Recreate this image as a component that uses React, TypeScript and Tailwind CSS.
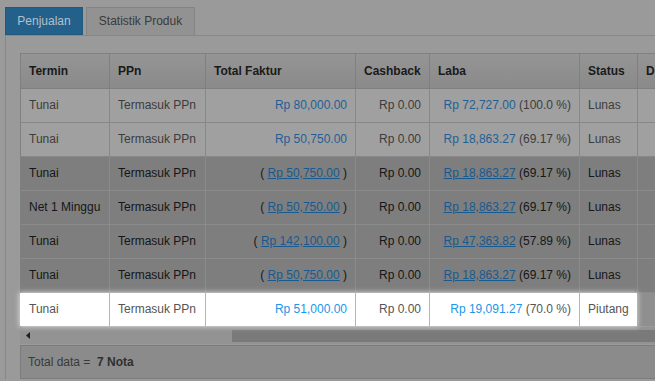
import React from 'react';

type Row = {
  termin: string;
  total: string;
  laba: string;
  persen: string;
  status: string;
  retur?: boolean;
};

const rows: Row[] = [
  { termin: 'Tunai', total: 'Rp 80,000.00', laba: 'Rp 72,727.00', persen: '(100.0 %)', status: 'Lunas' },
  { termin: 'Tunai', total: 'Rp 50,750.00', laba: 'Rp 18,863.27', persen: '(69.17 %)', status: 'Lunas' },
  { termin: 'Tunai', total: 'Rp 50,750.00', laba: 'Rp 18,863.27', persen: '(69.17 %)', status: 'Lunas', retur: true },
  { termin: 'Net 1 Minggu', total: 'Rp 50,750.00', laba: 'Rp 18,863.27', persen: '(69.17 %)', status: 'Lunas', retur: true },
  { termin: 'Tunai', total: 'Rp 142,100.00', laba: 'Rp 47,363.82', persen: '(57.89 %)', status: 'Lunas', retur: true },
  { termin: 'Tunai', total: 'Rp 50,750.00', laba: 'Rp 18,863.27', persen: '(69.17 %)', status: 'Lunas', retur: true },
];

const cell = 'px-2 flex items-center border-r shrink-0';

function DataRow({ row }: { row: Row }) {
  const bg = row.retur ? 'bg-[#7e7e7e] border-[#8b8b8b] text-[#161616]' : 'bg-[#a0a0a0] border-[#888888] text-[#3c3c3c]';
  const link = row.retur ? 'text-[#175a90] underline' : 'text-[#1f5f96]';
  return (
    <div className={`flex h-[34px] border-b ${bg}`}>
      <div className={`${cell} w-[89px] ${bg}`}>{row.termin}</div>
      <div className={`${cell} w-[96px] ${bg}`}>Termasuk PPn</div>
      <div className={`${cell} w-[150px] justify-end ${bg}`}>
        {row.retur ? (
          <span>
            ( <span className={link}>{row.total}</span> )
          </span>
        ) : (
          <span className={link}>{row.total}</span>
        )}
      </div>
      <div className={`${cell} w-[74px] justify-end ${bg}`}>Rp 0.00</div>
      <div className={`${cell} w-[150px] justify-end ${bg}`}>
        <span className={link}>{row.laba}</span>&nbsp;{row.persen}
      </div>
      <div className={`${cell} w-[58px] ${bg}`}>{row.status}</div>
      <div className={`${cell} w-[120px] ${bg}`}></div>
    </div>
  );
}

export default function App() {
  return (
    <div
      className="w-[655px] h-[381px] overflow-hidden bg-[#9a9a9a] text-[12px] leading-[17px] text-[#3c3c3c]"
      style={{ fontFamily: '"Liberation Sans", Arial, sans-serif' }}
    >
      <div className="flex gap-[3px] pl-[5px] pt-[7px]">
        <div className="h-[28px] w-[78px] flex items-center justify-center bg-[#24618a] border border-[#22587d] text-[#b3c0ca]">
          Penjualan
        </div>
        <div className="h-[28px] w-[109px] flex items-center justify-center bg-[#929292] border border-[#848484] border-b-0 text-[#3a3a3a]">
          Statistik Produk
        </div>
      </div>

      <div className="ml-[5px] border-l border-t border-[#878787] pt-[17px] pl-[14px] w-[700px]">
        <div className="w-[760px] border-l border-t border-[#808080]">
          <div className="flex h-[35px] border-b border-[#808080] bg-gradient-to-b from-[#959595] to-[#8a8a8a] font-bold text-[#1a1a1a]">
            <div className={`${cell} w-[89px] border-[#808080]`}>Termin</div>
            <div className={`${cell} w-[96px] border-[#808080]`}>PPn</div>
            <div className={`${cell} w-[150px] border-[#808080]`}>Total Faktur</div>
            <div className={`${cell} w-[74px] border-[#808080]`}>Cashback</div>
            <div className={`${cell} w-[150px] border-[#808080]`}>Laba</div>
            <div className={`${cell} w-[58px] border-[#808080]`}>Status</div>
            <div className={`${cell} w-[120px] border-[#808080]`}>Detail</div>
          </div>

          {rows.map((r, i) => (
            <DataRow key={i} row={r} />
          ))}

          <div className="flex h-[34px] border-b border-[#9b9b9b] bg-[#8f8f8f]">
            <div className="relative z-10 flex bg-white shadow-[0_0_5px_1px_rgba(255,255,255,0.6)] -ml-px pl-px">
              <div className={`${cell} w-[89px] border-[#b5b5b5] text-[#555]`}>Tunai</div>
              <div className={`${cell} w-[96px] border-[#b5b5b5] text-[#555]`}>Termasuk PPn</div>
              <div className={`${cell} w-[150px] border-[#b5b5b5] justify-end text-[#2196e8]`}>Rp 51,000.00</div>
              <div className={`${cell} w-[74px] border-[#b5b5b5] justify-end text-[#555]`}>Rp 0.00</div>
              <div className={`${cell} w-[150px] border-[#b5b5b5] justify-end text-[#555]`}>
                <span className="text-[#2196e8]">Rp 19,091.27</span>&nbsp;(70.0 %)
              </div>
              <div className={`${cell} w-[57px] border-r-0 text-[#555]`}>Piutang</div>
            </div>
            <div className={`${cell} w-[121px] border-l border-[#8a8a8a]`}></div>
          </div>
        </div>

        <div className="flex items-center h-[17px] w-[700px] bg-[#939393]">
          <svg width="12" height="17" viewBox="0 0 12 17" className="ml-[2px]">
            <path d="M8 5 L4 8.5 L8 12 Z" fill="#1e1e1e" />
          </svg>
          <div className="ml-[198px] h-[12px] flex-1 bg-[#7a7a7a]" />
        </div>

        <div className="mt-px h-[34px] w-[700px] border border-[#7c7c7c] bg-[#8b8b8b] flex items-center px-[7px] text-[#3a3a3a]">
          Total data =&nbsp;&nbsp;<span className="font-bold text-[#303030]">7 Nota</span>
        </div>
      </div>
    </div>
  );
}
